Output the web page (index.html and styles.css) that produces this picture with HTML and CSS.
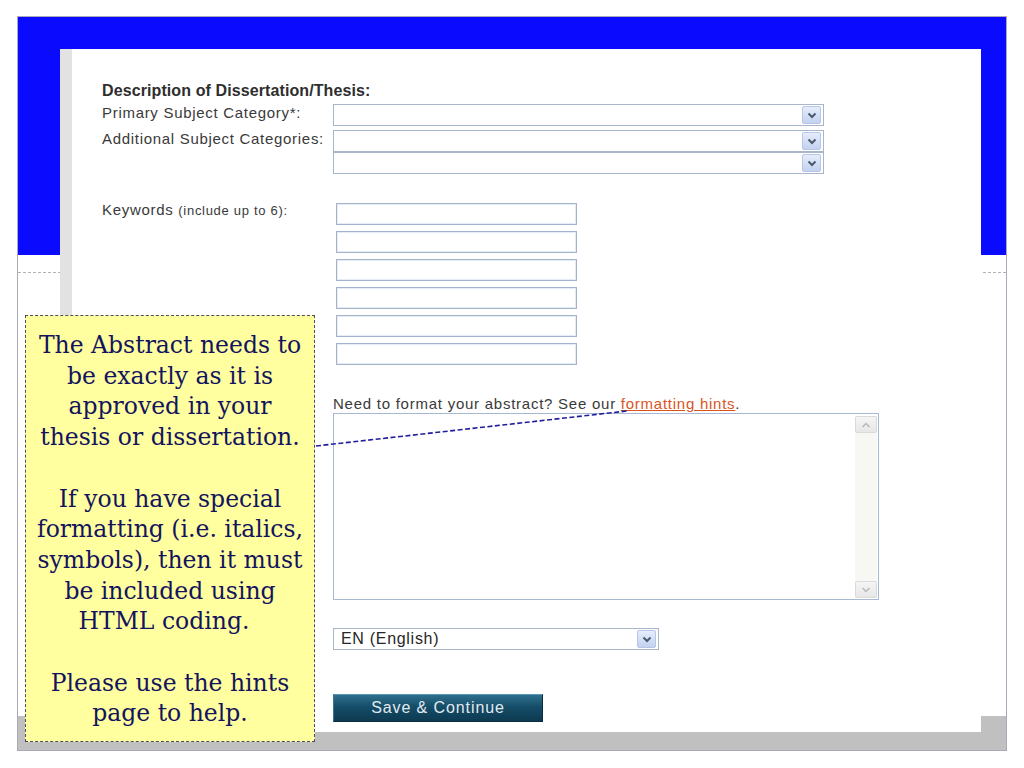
FILE: index.html
```html
<!DOCTYPE html>
<html lang="en">
<head>
<meta charset="utf-8">
<title>Description of Dissertation/Thesis</title>
<link rel="stylesheet" href="styles.css">
</head>
<body>
<div class="slide">
  <div class="band"></div>
  <div class="rule"></div>
  <div class="fill"></div>
  <div class="foot"></div>

  <div class="shot">
    <div class="strip"></div>
    <div class="form">
      <h2 class="heading">Description of Dissertation/Thesis:</h2>

      <div class="row row-primary">
        <div class="label">Primary Subject Category*:</div>
        <div class="controls">
          <div class="select wide"><span class="value"></span><span class="arrow"><svg width="10" height="7" viewBox="0 0 10 7"><path d="M1.5 1.5 L5 5 L8.5 1.5" fill="none" stroke="#4b596e" stroke-width="2"/></svg></span></div>
        </div>
      </div>

      <div class="row row-additional">
        <div class="label">Additional Subject Categories:</div>
        <div class="controls">
          <div class="select wide"><span class="value"></span><span class="arrow"><svg width="10" height="7" viewBox="0 0 10 7"><path d="M1.5 1.5 L5 5 L8.5 1.5" fill="none" stroke="#4b596e" stroke-width="2"/></svg></span></div>
          <div class="select wide"><span class="value"></span><span class="arrow"><svg width="10" height="7" viewBox="0 0 10 7"><path d="M1.5 1.5 L5 5 L8.5 1.5" fill="none" stroke="#4b596e" stroke-width="2"/></svg></span></div>
        </div>
      </div>

      <div class="row row-keywords">
        <div class="label kw-label">Keywords <span class="small">(include up to 6):</span></div>
        <div class="controls kw-list">
          <div class="kw"></div>
          <div class="kw"></div>
          <div class="kw"></div>
          <div class="kw"></div>
          <div class="kw"></div>
          <div class="kw"></div>
        </div>
      </div>

      <div class="indent need">Need to format your abstract? See our <a class="hint-link" href="#">formatting hints</a>.</div>
      <div class="indent area">
        <div class="scroll">
          <span class="sbtn"><svg width="10" height="6" viewBox="0 0 10 6"><path d="M1.5 5 L5 1.5 L8.5 5" fill="none" stroke="#b9b9b9" stroke-width="1.5"/></svg></span>
          <span class="sbtn"><svg width="10" height="6" viewBox="0 0 10 6"><path d="M1.5 1 L5 4.5 L8.5 1" fill="none" stroke="#b9b9b9" stroke-width="1.5"/></svg></span>
        </div>
      </div>

      <div class="indent select lang"><span class="value">EN (English)</span><span class="arrow"><svg width="10" height="7" viewBox="0 0 10 7"><path d="M1.5 1.5 L5 5 L8.5 1.5" fill="none" stroke="#4b596e" stroke-width="2"/></svg></span></div>

      <div class="indent save">Save &amp; Continue</div>
    </div>
  </div>

  <div class="callout">
    <p>The Abstract needs to<br>be exactly as it is<br>approved in your<br>thesis or dissertation.</p>
    <p>If you have special<br>formatting (i.e. italics,<br>symbols), then it must<br>be included using<br><span class="shift">HTML coding.</span></p>
    <p>Please use the hints<br>page to help.</p>
  </div>

  <svg class="connector" width="315" height="45" viewBox="0 0 315 45">
    <line x1="1" y1="41" x2="312" y2="6" stroke="#1f1f9e" stroke-width="1.6" stroke-dasharray="5 2.5"/>
  </svg>
</div>
</body>
</html>
```

FILE: styles.css
```css
* { box-sizing: border-box; }

body {
  margin: 0;
  background: #ffffff;
  font-family: "Liberation Sans", Arial, sans-serif;
}

.slide {
  position: relative;
  width: 990px;
  height: 735px;
  margin: 16px 0 0 17px;
  border: 1px solid #a9a9b8;
  display: flex;
  flex-direction: column;
}

.band {
  height: 238px;
  background: #0a0aff;
}

.rule {
  margin-top: 17px;
  border-top: 1px dashed #b2b2b2;
}

.fill { flex: 1; }

.foot {
  height: 34px;
  background: #c0c0c0;
}

/* screenshot placed over the slide */
.shot {
  position: absolute;
  left: 42px;
  top: 32px;
  width: 921px;
  height: 683px;
  background: #ffffff;
  display: flex;
}

.strip {
  width: 12px;
  background: #e2e2e2;
}

.form {
  flex: 1;
  padding: 33px 0 0 30px;
  color: #3a3a3a;
  font-size: 15px;
  letter-spacing: 0.7px;
}

.heading {
  margin: 0;
  font-size: 16px;
  font-weight: bold;
  line-height: 18px;
  letter-spacing: 0.1px;
  color: #2e2e2e;
}

.row {
  display: grid;
  grid-template-columns: 231px auto;
}

.label {
  line-height: 18px;
  white-space: nowrap;
}

.row-primary { margin-top: 4px; }
.row-additional { margin-top: 4px; }
.row-keywords { margin-top: 29px; }

.kw-label { line-height: 13px; }

.small {
  font-size: 13px;
  letter-spacing: 0.7px;
}

.select {
  height: 22px;
  border: 1px solid #a8b6ca;
  background: #ffffff;
  display: flex;
  align-items: center;
  justify-content: space-between;
  padding: 1px 2px 1px 7px;
}

.select.wide { width: 491px; }

.arrow {
  width: 19px;
  height: 18px;
  background: linear-gradient(#e6edfb, #c3d2f1);
  border: 1px solid #b7c6e6;
  border-radius: 2px;
  display: flex;
  align-items: center;
  justify-content: center;
}

.kw-list {
  display: flex;
  flex-direction: column;
  gap: 6px;
  padding-left: 3px;
}

.kw {
  width: 241px;
  height: 22px;
  border: 1px solid #a3b3c9;
  box-shadow: inset 0 0 0 1px #e6ecf3;
  background: #ffffff;
}

.indent { margin-left: 231px; }

.need {
  margin-top: 30px;
  line-height: 18px;
  white-space: nowrap;
  letter-spacing: 0.75px;
}

.hint-link {
  color: #d9541f;
  text-decoration: underline;
}

.area {
  width: 546px;
  height: 187px;
  border: 1px solid #a7b9d2;
  background: #ffffff;
  display: flex;
  justify-content: flex-end;
  padding: 2px 1px 1px 1px;
}

.scroll {
  width: 22px;
  background: #f7f7f4;
  display: flex;
  flex-direction: column;
  justify-content: space-between;
}

.sbtn {
  height: 17px;
  background: linear-gradient(#f5f5f5, #e7e7e7);
  border: 1px solid #dadada;
  border-radius: 2px;
  display: flex;
  align-items: center;
  justify-content: center;
}

.lang {
  margin-top: 28px;
  width: 326px;
  font-size: 16px;
  letter-spacing: 0.7px;
  color: #262626;
}

.save {
  margin-top: 44px;
  width: 210px;
  height: 28px;
  background: linear-gradient(#2d708d, #154d68 45%, #0d3a51);
  border: 1px solid #0b2c3e;
  border-top-color: #5a97b2;
  border-left-color: #3a7996;
  color: #e2eaf0;
  font-size: 16px;
  letter-spacing: 0.9px;
  display: flex;
  align-items: center;
  justify-content: center;
}

/* annotation callout */
.callout {
  position: absolute;
  left: 7px;
  top: 298px;
  width: 290px;
  height: 427px;
  background: #ffff9f;
  border: 1px dashed #4b4b6c;
  padding-top: 14px;
  font-family: "DejaVu Serif", "Liberation Serif", serif;
  font-size: 23.5px;
  line-height: 30.7px;
  color: #14145e;
  text-align: center;
  white-space: nowrap;
}

.callout p { margin: 0; }
.callout p + p { margin-top: 30.7px; }

.shift { padding-right: 12px; }

.connector {
  position: absolute;
  left: 297px;
  top: 388px;
  overflow: visible;
}
```
